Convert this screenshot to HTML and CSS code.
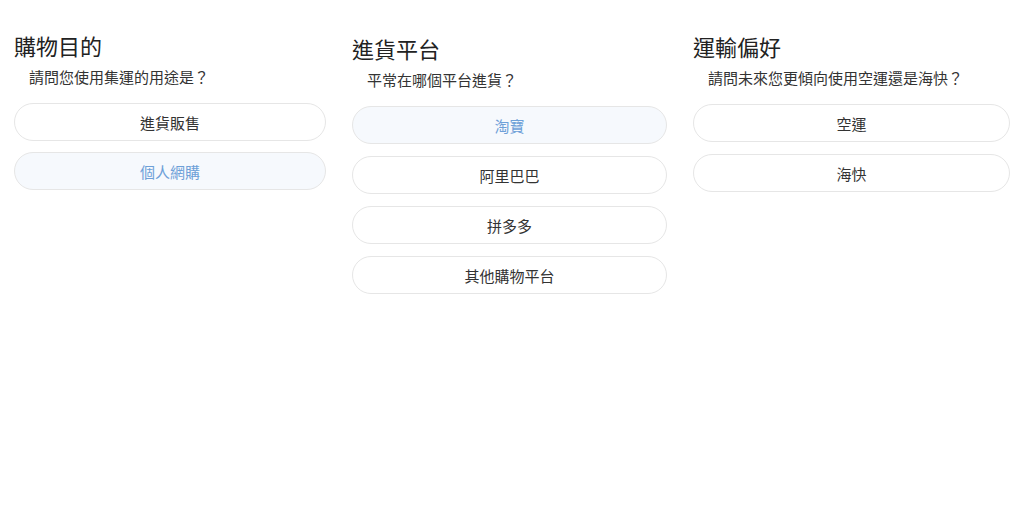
FILE: index.html
```html
<!DOCTYPE html>
<html lang="zh-Hant">

<head>
    <meta charset="UTF-8">
    <meta name="viewport" content="width=device-width, initial-scale=1.0">
    <title>集運問卷</title>
    <link rel="stylesheet" href="styles.css">
</head>

<body>
    <div class="survey">
        <!-- 購物目的 -->
        <div class="question">
            <h2 class="question-title">購物目的</h2>
            <p class="question-desc">請問您使用集運的用途是？</p>
            <div class="options">
                <button class="option">進貨販售</button>
                <button class="option selected">個人網購</button>
            </div>
        </div>
        <!-- 進貨平台 -->
        <div class="question question-mid">
            <h2 class="question-title">進貨平台</h2>
            <p class="question-desc">平常在哪個平台進貨？</p>
            <div class="options">
                <button class="option selected">淘寶</button>
                <button class="option">阿里巴巴</button>
                <button class="option">拼多多</button>
                <button class="option">其他購物平台</button>
            </div>
        </div>
        <!-- 運輸偏好 -->
        <div class="question question-last">
            <h2 class="question-title">運輸偏好</h2>
            <p class="question-desc">請問未來您更傾向使用空運還是海快？</p>
            <div class="options">
                <button class="option">空運</button>
                <button class="option">海快</button>
            </div>
        </div>
    </div>
</body>

</html>
```

FILE: styles.css
```css
body {
    margin: 0;
    background-color: #fff;
    font-family: "Noto Sans CJK TC", "Noto Sans", sans-serif;
    color: #333;
}

.survey {
    display: grid;
    grid-template-columns: 312px 315px 317px;
    column-gap: 26px;
    align-items: start;
    padding: 30px 14px 0 14px;
}

.question-mid {
    padding-top: 3px;
}

.question-last {
    padding-top: 1px;
}

.question-title {
    margin: 0;
    font-size: 22px;
    line-height: 30px;
    font-weight: 400;
    color: #222;
}

.question-desc {
    margin: 7px 0 16px 0;
    padding-left: 15px;
    font-size: 15px;
    line-height: 20px;
    color: #333;
}

.options {
    display: flex;
    flex-direction: column;
    gap: 11px;
}

.question-mid .options,
.question-last .options {
    gap: 12px;
}

.option {
    height: 38px;
    border: 1px solid #e6e6e6;
    border-radius: 19px;
    background-color: #fff;
    font-family: inherit;
    font-size: 15px;
    color: #333;
    text-align: center;
    padding: 0;
}

.option.selected {
    background-color: #f6f9fd;
    color: #6ea0d8;
}
```
